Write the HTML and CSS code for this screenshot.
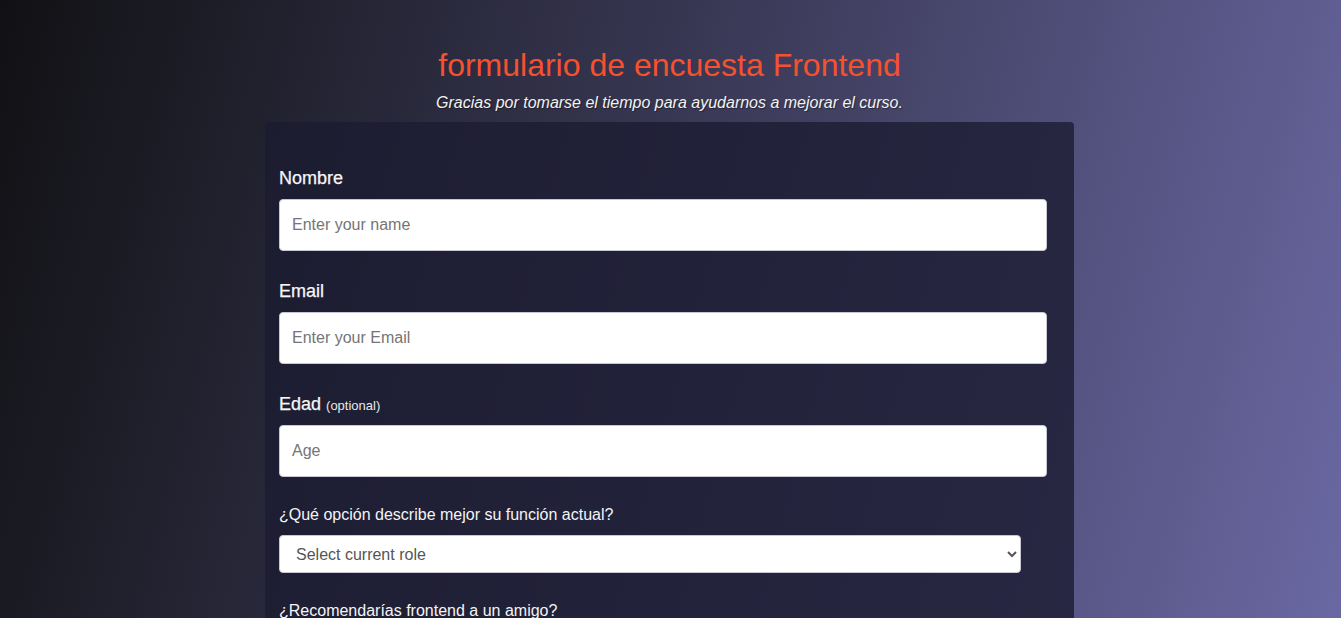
FILE: index.html
```html
<!DOCTYPE html>
<html lang="es">
<head>
<meta charset="utf-8">
<title>formulario de encuesta Frontend</title>
<link rel="stylesheet" href="styles.css">
</head>
<body>
<div class="page">
  <header class="header">
    <h1 class="title">formulario de encuesta Frontend</h1>
    <p class="description">Gracias por tomarse el tiempo para ayudarnos a mejorar el curso.</p>
  </header>
  <form class="survey">
    <div class="group">
      <label class="label-lg" for="name">Nombre</label>
      <input class="field" id="name" type="text" placeholder="Enter your name">
    </div>
    <div class="group">
      <label class="label-lg" for="email">Email</label>
      <input class="field" id="email" type="email" placeholder="Enter your Email">
    </div>
    <div class="group">
      <label class="label-lg" for="age">Edad <span class="clue">(optional)</span></label>
      <input class="field" id="age" type="number" placeholder="Age">
    </div>
    <div class="group">
      <label class="label-sm" for="role">¿Qué opción describe mejor su función actual?</label>
      <select class="select" id="role">
        <option>Select current role</option>
        <option>Student</option>
        <option>Full Time Job</option>
      </select>
    </div>
    <div class="group">
      <p class="label-sm">¿Recomendarías frontend a un amigo?</p>
    </div>
  </form>
</div>
</body>
</html>
```
FILE: styles.css
```css
* { box-sizing: border-box; }
html, body { margin: 0; padding: 0; }
body {
  font-family: "Liberation Sans", Arial, sans-serif;
  color: #f3f3f3;
  min-height: 100vh;
  background: linear-gradient(105deg, #111114 0%, #3b3a58 50%, #6a68a2 100%);
  background-attachment: fixed;
}
.page {
  padding-top: 47px;
}
.header {
  text-align: center;
  margin-left: -2px;
}
.title {
  margin: 0;
  font-size: 32px;
  font-weight: 400;
  line-height: 37px;
  color: #f5512f;
}
.description {
  margin: 10px 0 0 0;
  font-size: 16px;
  line-height: 18px;
  font-style: italic;
  color: #f2f2f2;
  text-shadow: 1px 1px 1px rgba(0,0,0,0.4);
}
.survey {
  width: 809px;
  margin: 10px 0 0 265px;
  padding: 40px 10px;
  background-color: rgba(27, 27, 50, 0.8);
  border-radius: 4px;
}
.group {
  padding: 4px;
  margin-bottom: 20px;
  display: flex;
  flex-direction: column;
  gap: 8px;
}
.label-lg {
  font-size: 18px;
  line-height: 25px;
  height: 25px;
  color: #f6f6f6;
  -webkit-text-stroke: 0.25px #f6f6f6;
}
.clue {
  font-size: 13px;
  line-height: 13px;
  color: #e8e8e8;
  -webkit-text-stroke: 0;
}
.label-sm {
  margin: 0 0 2px 0;
  font-size: 16px;
  line-height: 20px;
  color: #f4f4f4;
}
.field {
  width: 768px;
  height: 52px;
  padding: 6px 12px;
  font-family: "Liberation Sans", Arial, sans-serif;
  font-size: 16px;
  color: #495057;
  background: #fff;
  border: 1px solid #c8c8d2;
  border-radius: 4px;
  outline: none;
}
.field::placeholder { color: #757575; }
.select {
  width: 742px;
  height: 38px;
  padding: 6px 12px;
  font-family: "Liberation Sans", Arial, sans-serif;
  font-size: 16px;
  color: #555;
  background: #fff;
  border: 1px solid #c8c8d2;
  border-radius: 4px;
}
```
